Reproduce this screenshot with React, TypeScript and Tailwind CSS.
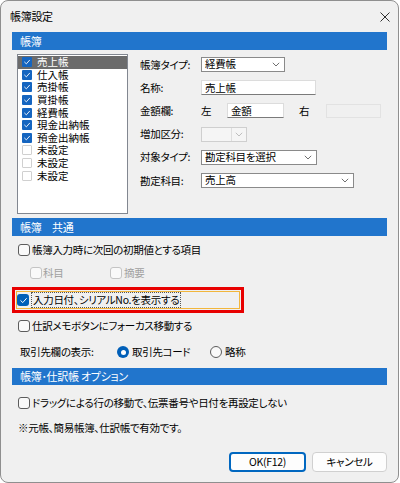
import React from 'react';

const font = "font-['Noto_Sans_CJK_JP','Noto_Sans',sans-serif] [font-feature-settings:'palt'] tracking-[-0.3px]";

const ledgers = [
  { label: '売上帳', checked: true, selected: true },
  { label: '仕入帳', checked: true },
  { label: '売掛帳', checked: true },
  { label: '買掛帳', checked: true },
  { label: '経費帳', checked: true },
  { label: '現金出納帳', checked: true },
  { label: '預金出納帳', checked: true },
  { label: '未設定', checked: false },
  { label: '未設定', checked: false },
  { label: '未設定', checked: false },
];

function Check({ className = 'h-[8px] w-[8px]' }: { className?: string }) {
  return (
    <svg viewBox="0 0 10 10" className={className} fill="none">
      <path d="M2 5.2 L4.2 7.3 L8.2 2.8" stroke="white" strokeWidth="1.1" strokeLinecap="round" strokeLinejoin="round" />
    </svg>
  );
}

// Windows 11 style checkbox
function CheckBox({ checked = false, disabled = false }: { checked?: boolean; disabled?: boolean }) {
  if (checked) {
    return (
      <span className="flex h-[12px] w-[12px] shrink-0 items-center justify-center rounded-[3px] bg-[#005fb8]">
        <Check className="h-[9px] w-[9px]" />
      </span>
    );
  }
  return (
    <span
      className={`h-[12px] w-[12px] shrink-0 rounded-[3px] border bg-[#f9f9f9] ${
        disabled ? 'border-[#c4c4c4]' : 'border-[#5c5c5c]'
      }`}
    />
  );
}

function Radio({ checked = false }: { checked?: boolean }) {
  if (checked) {
    return (
      <span className="flex h-[12px] w-[12px] shrink-0 items-center justify-center rounded-full bg-[#005fb8]">
        <span className="h-[5px] w-[5px] rounded-full bg-white" />
      </span>
    );
  }
  return <span className="h-[12px] w-[12px] shrink-0 rounded-full border border-[#5c5c5c] bg-[#f9f9f9]" />;
}

function Chevron({ color = '#606060' }: { color?: string }) {
  return (
    <svg viewBox="0 0 8 5" className="h-[5px] w-[8px]" fill="none">
      <path d="M0.8 0.8 L4 4 L7.2 0.8" stroke={color} strokeWidth="0.9" />
    </svg>
  );
}

function Select({ value, width }: { value: string; width: string }) {
  return (
    <div
      className={`${width} flex h-[15px] items-center justify-between border border-[#8a8a8a] bg-white pl-[3px] pr-[4px]`}
    >
      <span className="leading-none">{value}</span>
      <Chevron />
    </div>
  );
}

function SectionHeader({ title, h = 'h-[18px]' }: { title: string; h?: string }) {
  return (
    <div className={`${h} flex items-center bg-[#2175cc] pl-[8px] text-[11px] leading-none text-white`}>{title}</div>
  );
}

export default function App() {
  return (
    <div className={`h-[483px] w-[400px] bg-white text-[10.5px] text-black ${font}`}>
      <div className="flex h-[483px] w-[399px] flex-col rounded-[8px] border border-[#8f8f8f] bg-[#f0f0f0]">
        {/* title bar */}
        <div className="flex h-[31px] shrink-0 items-center justify-between pl-[9px] pr-[8px]">
          <span className="text-[11px]">帳簿設定</span>
          <svg viewBox="0 0 10 10" className="h-[10px] w-[10px]" fill="none">
            <path d="M0.5 0.5 L9.5 9.5 M9.5 0.5 L0.5 9.5" stroke="#1a1a1a" strokeWidth="0.9" />
          </svg>
        </div>

        <div className="flex flex-col px-[11px]">
          <SectionHeader title="帳簿" />

          {/* ledger list + properties */}
          <div className="mt-[4px] flex">
            <div className="ml-[5px] h-[160px] w-[111px] shrink-0 border border-[#828790] bg-white pt-[1px]">
              {ledgers.map((item, i) => (
                <div
                  key={`ledger-${i}`}
                  className={`flex h-[12.6px] items-center gap-[5px] pl-[4px] text-[10.5px] leading-[10px] ${
                    item.selected ? 'bg-[#6b6b6b] text-white' : ''
                  }`}
                >
                  {item.checked ? (
                    <span className="flex h-[10px] w-[10px] shrink-0 items-center justify-center rounded-[1px] bg-[#1565c0]">
                      <Check />
                    </span>
                  ) : (
                    <span className="h-[10px] w-[10px] shrink-0 rounded-[1px] border border-[#d0d0d0] bg-white" />
                  )}
                  <span className="tracking-normal">{item.label}</span>
                </div>
              ))}
            </div>

            <div className="ml-[12px] mt-[-1px] flex flex-col">
              <div className="flex h-[23.2px] items-center">
                <span className="w-[61px]">帳簿タイプ:</span>
                <Select value="経費帳" width="w-[84px]" />
              </div>
              <div className="flex h-[23.2px] items-center">
                <span className="w-[61px]">名称:</span>
                <div className="flex h-[15px] w-[115px] items-center border border-[#dcdcdc] border-b-[#7a7a7a] bg-white pl-[3px] leading-none">
                  売上帳
                </div>
              </div>
              <div className="flex h-[23.2px] items-center">
                <span className="w-[61px]">金額欄:</span>
                <span className="w-[26px]">左</span>
                <div className="flex h-[15px] w-[57px] items-center border border-[#dcdcdc] border-b-[#7a7a7a] bg-white pl-[3px] leading-none">
                  金額
                </div>
                <span className="ml-[15px] w-[27px]">右</span>
                <div className="h-[14px] w-[55px] border border-[#e2e2e2] bg-[#f0f0f0]" />
              </div>
              <div className="flex h-[23.2px] items-center">
                <span className="w-[61px]">増加区分:</span>
                <div className="flex h-[15px] w-[46px] items-center border border-[#cfcfcf] bg-[#f5f5f5]">
                  <span className="h-full w-[30px] border-r border-[#dedede]" />
                  <span className="flex flex-1 justify-center">
                    <Chevron color="#b8b8b8" />
                  </span>
                </div>
              </div>
              <div className="flex h-[23.2px] items-center">
                <span className="w-[61px]">対象タイプ:</span>
                <Select value="勘定科目を選択" width="w-[116px]" />
              </div>
              <div className="flex h-[23.2px] items-center">
                <span className="w-[61px]">勘定科目:</span>
                <Select value="売上高" width="w-[153px]" />
              </div>
            </div>
          </div>

          <div className="mt-[4px]">
            <SectionHeader title="帳簿　共通" />
          </div>

          <div className="ml-[6px] mt-[7px] flex h-[14px] items-center gap-[2px]">
            <CheckBox />
            <span>帳簿入力時に次回の初期値とする項目</span>
          </div>

          <div className="ml-[18px] mt-[9px] flex h-[14px] items-center text-[#a0a0a0]">
            <div className="flex w-[80px] items-center gap-[1px]">
              <CheckBox disabled />
              <span>科目</span>
            </div>
            <div className="flex items-center gap-[2px]">
              <CheckBox disabled />
              <span>摘要</span>
            </div>
          </div>

          {/* highlighted option */}
          <div className="mt-[7px] h-[26px] w-[232px] border-[3px] border-[#e80000] p-[1px]">
            <div className="flex h-full items-center gap-[2px] border border-[#f2b63c]">
              <CheckBox checked />
              <span className="flex h-[16px] items-center border border-dotted border-[#555] px-[1px] leading-none">
                入力日付、シリアルNo.を表示する
              </span>
            </div>
          </div>

          <div className="ml-[6px] mt-[6px] flex h-[14px] items-center gap-[2px]">
            <CheckBox />
            <span>仕訳メモボタンにフォーカス移動する</span>
          </div>

          <div className="ml-[8px] mt-[12px] flex h-[14px] items-center">
            <span className="w-[97px]">取引先欄の表示:</span>
            <div className="flex w-[93px] items-center gap-[3px]">
              <Radio checked />
              <span>取引先コード</span>
            </div>
            <div className="flex items-center gap-[3px]">
              <Radio />
              <span>略称</span>
            </div>
          </div>

          <div className="mt-[9px]">
            <SectionHeader title="帳簿･仕訳帳 オプション" h="h-[17px]" />
          </div>

          <div className="ml-[6px] mt-[11px] flex h-[14px] items-center gap-[2px]">
            <CheckBox />
            <span>ドラッグによる行の移動で、伝票番号や日付を再設定しない</span>
          </div>

          <div className="ml-[6px] mt-[11px] flex h-[14px] items-center">※元帳、簡易帳簿、仕訳帳で有効です。</div>

          <div className="mt-[17px] flex justify-end gap-[6px]">
            <button className="flex h-[20px] w-[77px] items-center justify-center rounded-[4px] border-2 border-[#0067c0] bg-[#fdfdfd] leading-none">
              OK(F12)
            </button>
            <button className="flex h-[20px] w-[75px] items-center justify-center rounded-[4px] border border-[#d0d0d0] bg-[#fdfdfd] leading-none">
              キャンセル
            </button>
          </div>
        </div>
      </div>
    </div>
  );
}
